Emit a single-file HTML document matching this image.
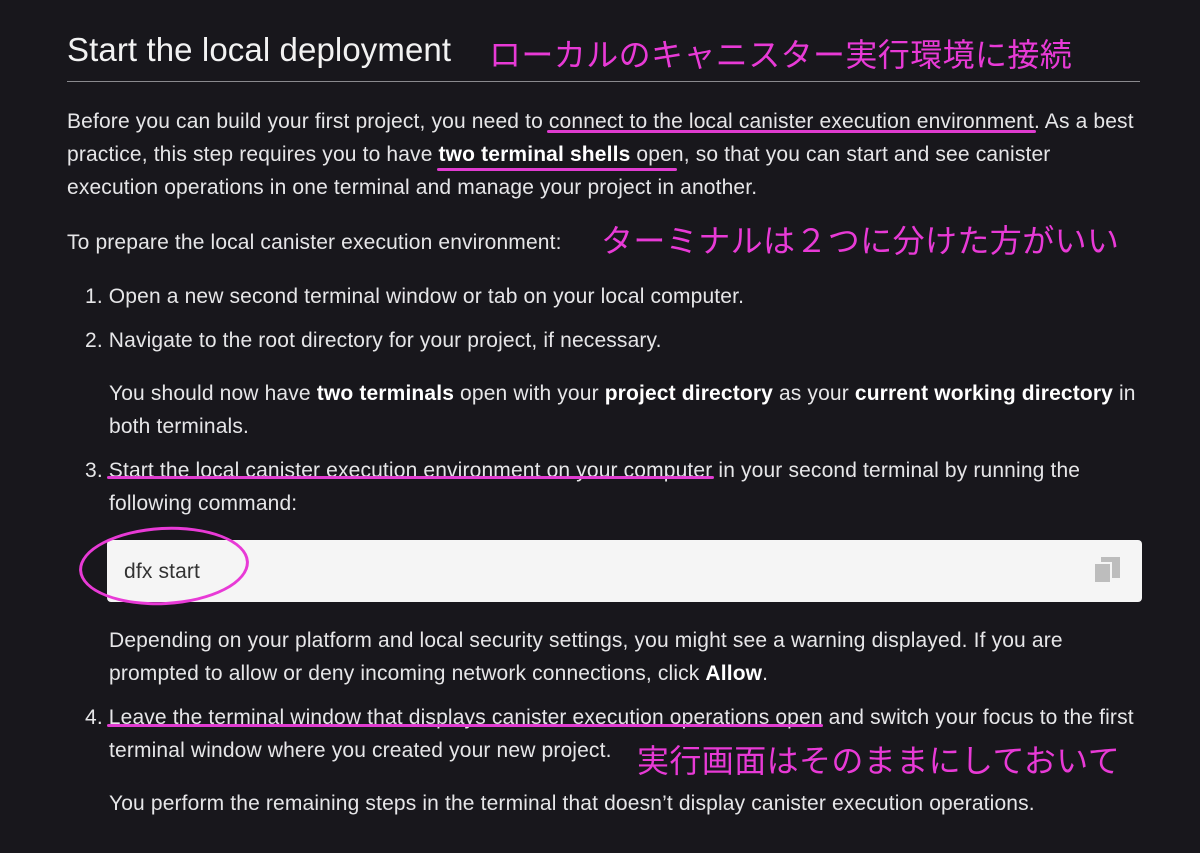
<!DOCTYPE html>
<html><head><meta charset="utf-8"><style>
body{margin:0;width:1200px;height:853px;background:#18171c;overflow:hidden;font-family:"Liberation Sans","Noto Sans CJK JP",sans-serif;color:#e6e6e8;position:relative}
.t{position:absolute;white-space:nowrap;font-size:21px;line-height:26px;letter-spacing:0.15px}
.j{position:absolute;white-space:nowrap;color:#e83ad6;font-family:"Noto Sans CJK JP",sans-serif;font-size:32px;line-height:40px;letter-spacing:0.4px}
.u{position:absolute;height:3px;background:#e03cd0;border-radius:2px}
b{font-weight:bold;color:#fff}
</style></head><body>
<div class="t" style="left:67px;top:30px;font-size:33px;line-height:40px;color:#f2f2f2;letter-spacing:0.1px">Start the local deployment</div>
<div class="j" style="left:489px;top:33px">ローカルのキャニスター実行環境に接続</div>
<div style="position:absolute;left:67px;top:81px;width:1073px;height:1px;background:#8a8a8e"></div>

<div class="t" style="left:67px;top:109px">Before you can build your first project, you need to connect to the local canister execution environment. As a best</div>
<div class="u" style="left:547px;top:130px;width:489px"></div>
<div class="t" style="left:67px;top:142px">practice, this step requires you to have <b>two terminal shells</b> open, so that you can start and see canister</div>
<div class="u" style="left:437px;top:168px;width:240px"></div>
<div class="t" style="left:67px;top:175px">execution operations in one terminal and manage your project in another.</div>

<div class="t" style="left:67px;top:230px">To prepare the local canister execution environment:</div>
<div class="j" style="left:601px;top:219px;font-size:32px">ターミナルは２つに分けた方がいい</div>

<div class="t" style="left:85px;top:284px">1. Open a new second terminal window or tab on your local computer.</div>
<div class="t" style="left:85px;top:328px">2. Navigate to the root directory for your project, if necessary.</div>
<div class="t" style="left:109px;top:381px">You should now have <b>two terminals</b> open with your <b>project directory</b> as your <b>current working directory</b> in</div>
<div class="t" style="left:109px;top:414px">both terminals.</div>

<div class="t" style="left:85px;top:458px">3. Start the local canister execution environment on your computer in your second terminal by running the</div>
<div class="u" style="left:107px;top:476px;width:607px"></div>
<div class="t" style="left:109px;top:491px">following command:</div>

<div style="position:absolute;left:107px;top:540px;width:1035px;height:62px;background:#f5f5f5;border-radius:4px"></div>
<div class="t" style="left:124px;top:559px;color:#333">dfx start</div>
<div style="position:absolute;left:1101px;top:557px;width:19px;height:21px;background:#bdbdbd"></div>
<div style="position:absolute;left:1093px;top:562px;width:19px;height:22px;background:#bdbdbd;border:2px solid #f5f5f5;box-sizing:border-box"></div>
<div style="position:absolute;left:79px;top:527px;width:164px;height:72px;border:3px solid #e83ad6;border-radius:50%;transform:rotate(-3deg)"></div>

<div class="t" style="left:109px;top:628px">Depending on your platform and local security settings, you might see a warning displayed. If you are</div>
<div class="t" style="left:109px;top:661px">prompted to allow or deny incoming network connections, click <b>Allow</b>.</div>

<div class="t" style="left:85px;top:705px">4. Leave the terminal window that displays canister execution operations open and switch your focus to the first</div>
<div class="u" style="left:107px;top:724px;width:716px"></div>
<div class="t" style="left:109px;top:738px">terminal window where you created your new project.</div>
<div class="j" style="left:637px;top:739px">実行画面はそのままにしておいて</div>

<div class="t" style="left:109px;top:791px">You perform the remaining steps in the terminal that doesn’t display canister execution operations.</div>
</body></html>
